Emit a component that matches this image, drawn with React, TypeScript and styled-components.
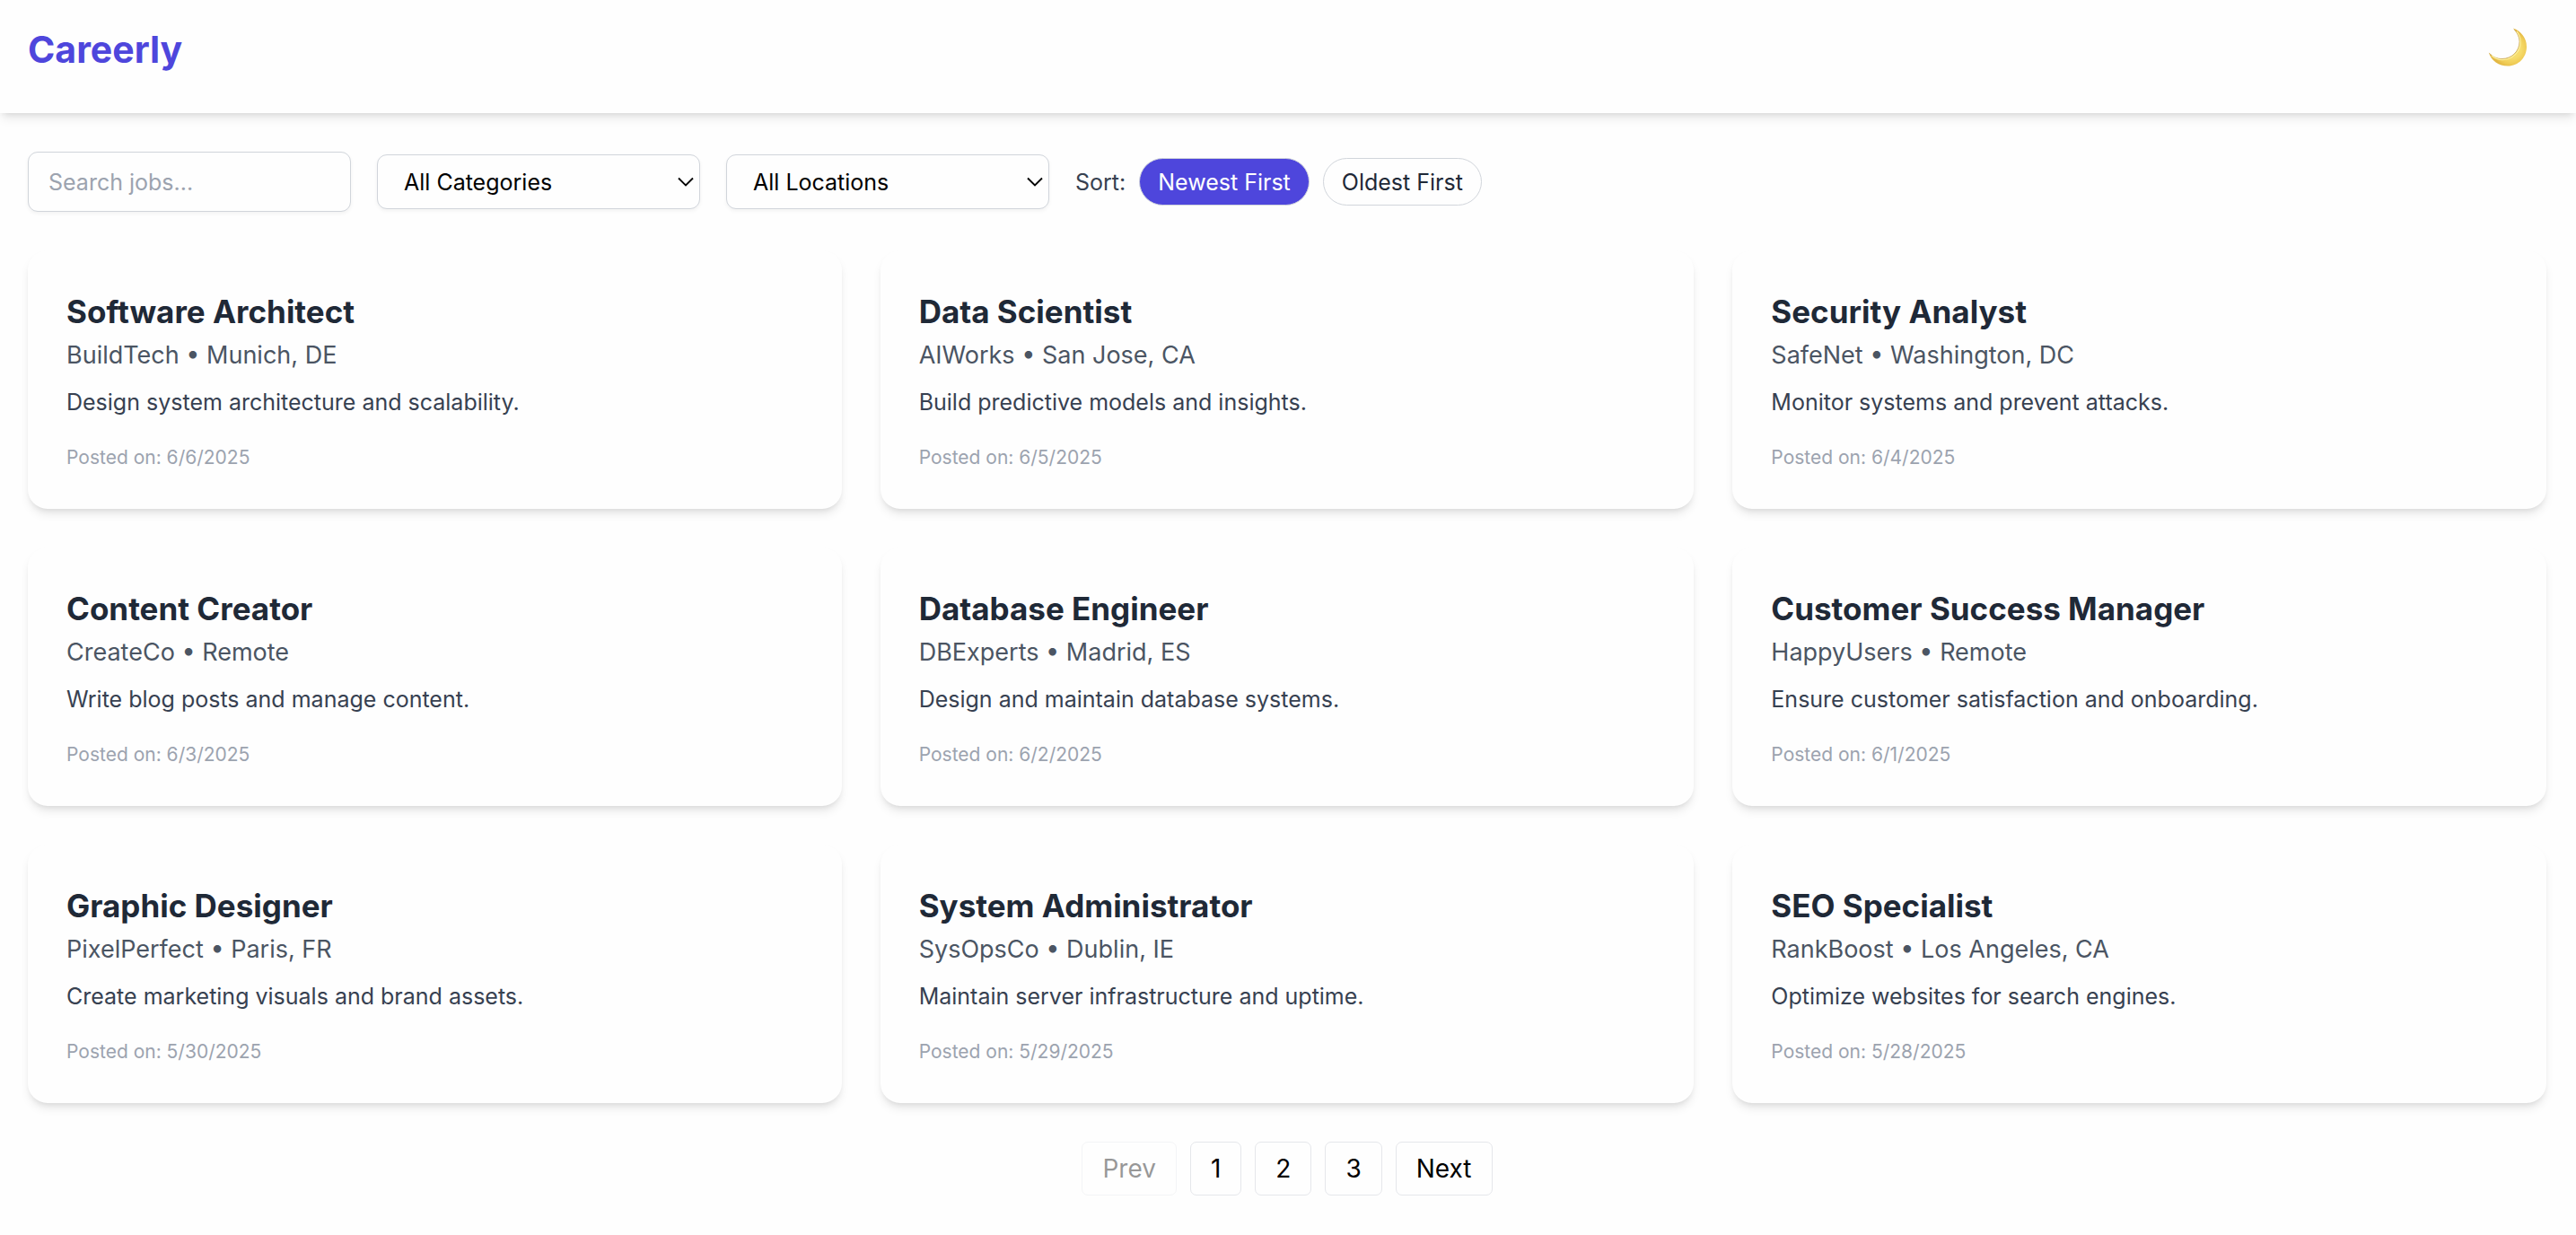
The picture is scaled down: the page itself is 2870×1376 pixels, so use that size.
import { useId, useState } from "react";
import styled, { createGlobalStyle } from "styled-components";

const GlobalStyle = createGlobalStyle`
  *, *::before, *::after {
    box-sizing: border-box;
  }
  body {
    margin: 0;
    background: #fefefe;
    color: #000;
    font-family: Inter, "Liberation Sans", sans-serif;
  }
  h1, h2, p {
    margin: 0;
  }
  button, input, select {
    margin: 0;
    font-family: inherit;
  }
`;

const Header = styled.header`
  display: flex;
  align-items: center;
  justify-content: space-between;
  padding: 26px 32px 42px 31px;
  background: #fefefe;
  box-shadow: 0 7px 11px -2px rgba(0, 0, 0, 0.1), 0 4px 7px -4px rgba(0, 0, 0, 0.1);
`;

const Logo = styled.h1`
  font-size: 41px;
  line-height: 58px;
  font-weight: 700;
  color: #4e46dc;
`;

const ThemeToggle = styled.button`
  display: flex;
  padding: 0 22px 4px;
  border: 0;
  background: none;
  cursor: pointer;
`;

const Main = styled.main`
  display: flex;
  flex-direction: column;
  gap: 43px;
  padding: 43px 33px 43px 31px;
`;

const Toolbar = styled.div`
  display: flex;
  flex-wrap: wrap;
  align-items: center;
  gap: 29px;
`;

const SearchInput = styled.input`
  width: 360px;
  padding: 15px 22px 14px;
  border: 1px solid #d1d5db;
  border-radius: 11px;
  background: #fefefe;
  box-shadow: 0 2px 4px rgba(0, 0, 0, 0.05);
  font-size: 25px;
  line-height: 36px;
  color: #1f2937;

  &::placeholder {
    color: #9ca3af;
    opacity: 1;
  }
`;

const SelectBox = styled.div`
  display: grid;
  align-items: center;
  width: 360px;

  > * {
    grid-area: 1 / 1;
  }

  > svg {
    justify-self: end;
    margin-right: 7px;
    pointer-events: none;
  }
`;

const Select = styled.select`
  appearance: none;
  width: 100%;
  height: 61px;
  padding: 0 29px;
  border: 1px solid #d1d5db;
  border-radius: 11px;
  background: #fefefe;
  box-shadow: 0 2px 4px rgba(0, 0, 0, 0.05);
  font-size: 25px;
  color: #000;
`;

const SortGroup = styled.div`
  display: flex;
  align-items: center;
  gap: 15px;
`;

const SortLabel = styled.span`
  font-size: 25px;
  line-height: 36px;
  color: #374151;
`;

const SortButton = styled.button<{ $active: boolean }>`
  padding: 8px 20px 7px;
  border: 1px solid #d1d5db;
  border-radius: 27px;
  background: ${(p) => (p.$active ? "#4e46dc" : "#fefefe")};
  font-size: 25px;
  line-height: 36px;
  color: ${(p) => (p.$active ? "#fff" : "#1f2937")};
  cursor: pointer;
`;

const JobGrid = styled.section`
  display: grid;
  grid-template-columns: repeat(3, minmax(0, 1fr));
  gap: 43px;
`;

const Card = styled.article`
  padding: 43px;
  border-radius: 22px;
  background: #fefefe;
  box-shadow: 0 7px 11px -2px rgba(0, 0, 0, 0.1), 0 4px 7px -4px rgba(0, 0, 0, 0.1);
`;

const JobTitle = styled.h2`
  font-size: 35px;
  line-height: 50px;
  font-weight: 700;
  color: #1f2937;
`;

const JobMeta = styled.p`
  margin-top: 2px;
  font-size: 27px;
  line-height: 43px;
  color: #4b5563;
`;

const JobSummary = styled.p`
  margin-top: 13px;
  font-size: 25px;
  line-height: 36px;
  color: #374151;
`;

const JobDate = styled.p`
  margin-top: 29px;
  font-size: 21px;
  line-height: 29px;
  color: #9ca3af;
`;

const Pagination = styled.nav`
  display: flex;
  justify-content: center;
  gap: 15px;
`;

const PageButton = styled.button`
  padding: 8px 22px 7px;
  border: 1px solid #e5e7eb;
  border-radius: 7px;
  background: #fefefe;
  font-size: 28px;
  line-height: 43px;
  color: #000;
  cursor: pointer;

  &:disabled {
    opacity: 0.4;
    cursor: default;
  }
`;

type Job = { title: string; company: string; place: string; summary: string; date: string };

const jobs: Job[] = [
  { title: "Software Architect", company: "BuildTech", place: "Munich, DE", summary: "Design system architecture and scalability.", date: "6/6/2025" },
  { title: "Data Scientist", company: "AIWorks", place: "San Jose, CA", summary: "Build predictive models and insights.", date: "6/5/2025" },
  { title: "Security Analyst", company: "SafeNet", place: "Washington, DC", summary: "Monitor systems and prevent attacks.", date: "6/4/2025" },
  { title: "Content Creator", company: "CreateCo", place: "Remote", summary: "Write blog posts and manage content.", date: "6/3/2025" },
  { title: "Database Engineer", company: "DBExperts", place: "Madrid, ES", summary: "Design and maintain database systems.", date: "6/2/2025" },
  { title: "Customer Success Manager", company: "HappyUsers", place: "Remote", summary: "Ensure customer satisfaction and onboarding.", date: "6/1/2025" },
  { title: "Graphic Designer", company: "PixelPerfect", place: "Paris, FR", summary: "Create marketing visuals and brand assets.", date: "5/30/2025" },
  { title: "System Administrator", company: "SysOpsCo", place: "Dublin, IE", summary: "Maintain server infrastructure and uptime.", date: "5/29/2025" },
  { title: "SEO Specialist", company: "RankBoost", place: "Los Angeles, CA", summary: "Optimize websites for search engines.", date: "5/28/2025" },
];

function MoonIcon() {
  const id = useId();
  return (
    <svg width="44" height="44" viewBox="0 0 44 44" aria-hidden="true">
      <defs>
        <radialGradient id={id} cx="0.6" cy="0.55" r="0.5">
          <stop offset="0.5" stopColor="#f6dc6c" />
          <stop offset="0.8" stopColor="#efcb55" />
          <stop offset="1" stopColor="#e3b844" />
        </radialGradient>
      </defs>
      <path
        d="M28 0.5C36.500 3.500 43 11 43 21C43 33 34 42.500 22 42.500C12 42.500 3.500 36.500 0.800 27.500C5 32.500 10 34.500 15.500 34.500C26.500 34.500 35 26 35 15.500C35 10 32.500 5 28 0.500Z"
        fill={`url(#${id})`}
      />
      <path
        d="M1.500 28.300C5.500 32.800 10 34.500 15.500 34.500C26.500 34.500 35 26 35 15.500C35 10.500 33 6 29 1.800"
        fill="none"
        stroke="#b98f3c"
        strokeOpacity="0.7"
        strokeWidth="0.9"
      />
      <path
        d="M4 31C8 34.500 11 35.600 16 35.600C27 35.600 36.100 27 36.100 16C36.100 11 34.500 7 32 4"
        fill="none"
        stroke="#fbee9c"
        strokeWidth="1.200"
      />
    </svg>
  );
}

function Chevron() {
  return (
    <svg width="18" height="12" viewBox="0 0 18 12" aria-hidden="true">
      <path d="M1 1.500L9 9.500L17 1.500" fill="none" stroke="#000" strokeWidth="1.900" />
    </svg>
  );
}

function Dropdown({ label, options }: { label: string; options: string[] }) {
  return (
    <SelectBox>
      <Select aria-label={label}>
        {options.map((option) => (
          <option key={option}>{option}</option>
        ))}
      </Select>
      <Chevron />
    </SelectBox>
  );
}

export default function App() {
  const [newest, setNewest] = useState(true);
  const time = (job: Job) => new Date(job.date).getTime();
  const sorted = [...jobs].sort((a, b) => (newest ? time(b) - time(a) : time(a) - time(b)));

  return (
    <>
      <GlobalStyle />
      <Header>
        <Logo>Careerly</Logo>
        <ThemeToggle type="button" aria-label="Toggle dark mode">
          <MoonIcon />
        </ThemeToggle>
      </Header>
      <Main>
        <Toolbar>
          <SearchInput type="text" aria-label="Search jobs" placeholder="Search jobs..." />
          <Dropdown label="Category" options={["All Categories"]} />
          <Dropdown label="Location" options={["All Locations"]} />
          <SortGroup>
            <SortLabel>Sort:</SortLabel>
            <SortButton type="button" $active={newest} onClick={() => setNewest(true)}>
              Newest First
            </SortButton>
            <SortButton type="button" $active={!newest} onClick={() => setNewest(false)}>
              Oldest First
            </SortButton>
          </SortGroup>
        </Toolbar>
        <JobGrid>
          {sorted.map((job) => (
            <Card key={job.title}>
              <JobTitle>{job.title}</JobTitle>
              <JobMeta>{`${job.company} • ${job.place}`}</JobMeta>
              <JobSummary>{job.summary}</JobSummary>
              <JobDate>{`Posted on: ${job.date}`}</JobDate>
            </Card>
          ))}
        </JobGrid>
        <Pagination aria-label="Pages">
          <PageButton type="button" disabled>Prev</PageButton>
          <PageButton type="button">1</PageButton>
          <PageButton type="button">2</PageButton>
          <PageButton type="button">3</PageButton>
          <PageButton type="button">Next</PageButton>
        </Pagination>
      </Main>
    </>
  );
}
